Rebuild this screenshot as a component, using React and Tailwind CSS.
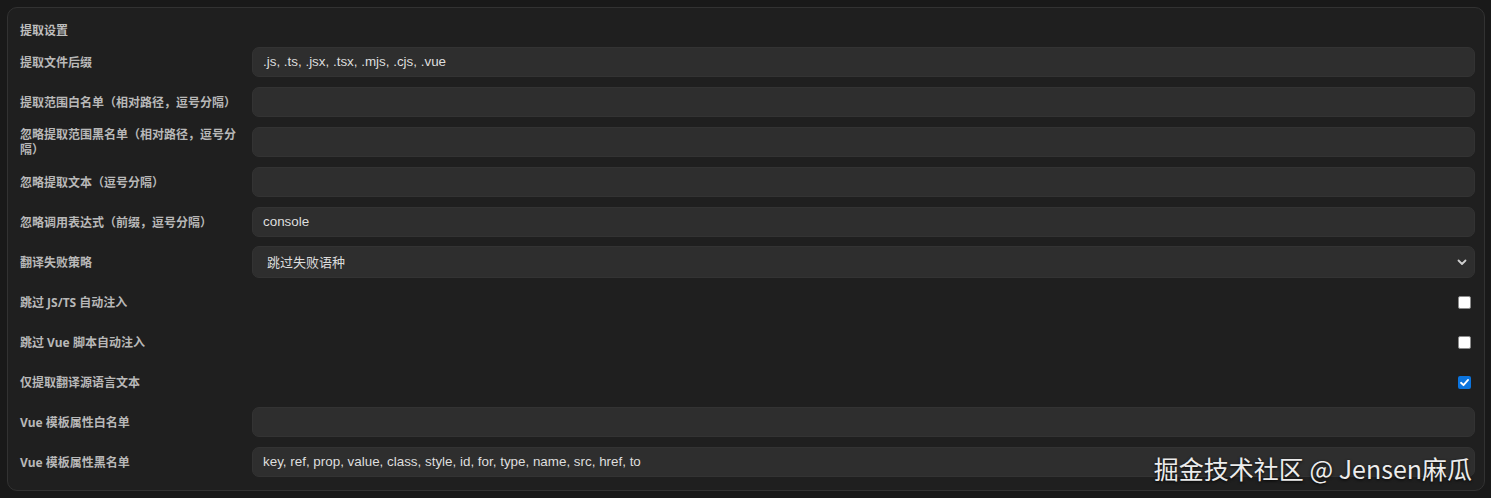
import React from "react";

const rows = [
  { label: "提取文件后缀", type: "input", value: ".js, .ts, .jsx, .tsx, .mjs, .cjs, .vue" },
  { label: "提取范围白名单（相对路径，逗号分隔）", type: "input", value: "" },
  { label: "忽略提取范围黑名单（相对路径，逗号分隔）", type: "input", value: "" },
  { label: "忽略提取文本（逗号分隔）", type: "input", value: "" },
  { label: "忽略调用表达式（前缀，逗号分隔）", type: "input", value: "console" },
  { label: "翻译失败策略", type: "select", value: "跳过失败语种" },
  { label: "跳过 JS/TS 自动注入", type: "check", value: false },
  { label: "跳过 Vue 脚本自动注入", type: "check", value: false },
  { label: "仅提取翻译源语言文本", type: "check", value: true },
  { label: "Vue 模板属性白名单", type: "input", value: "" },
  {
    label: "Vue 模板属性黑名单",
    type: "input",
    value: "key, ref, prop, value, class, style, id, for, type, name, src, href, to",
  },
];

function Field({ row }) {
  if (row.type === "check") {
    return (
      <div className="h-[30px] flex items-center justify-end pr-[4px]">
        {row.value ? (
          <span className="w-[13px] h-[13px] rounded-[2px] bg-[#0b74de] flex items-center justify-center">
            <svg width="11" height="11" viewBox="0 0 12 12">
              <path d="M2.2 6.3 L4.9 8.9 L9.9 3.2" fill="none" stroke="#fff" strokeWidth="2" strokeLinecap="round" strokeLinejoin="round" />
            </svg>
          </span>
        ) : (
          <span className="w-[13px] h-[13px] rounded-[2px] bg-white border border-[#8a8a8a]" />
        )}
      </div>
    );
  }
  if (row.type === "select") {
    return (
      <div className="h-[32px] -my-px rounded-[7px] bg-[#2e2e2e] border border-[#333] flex items-center justify-between pl-[14px] pr-[6px]">
        <span className="text-[13px] text-[#dcdcdc] font-['Noto_Sans_CJK_SC',sans-serif]">{row.value}</span>
        <svg width="12" height="12" viewBox="0 0 12 12">
          <path d="M2.5 4.5 L6 8 L9.5 4.5" fill="none" stroke="#cfcfcf" strokeWidth="1.8" strokeLinecap="round" strokeLinejoin="round" />
        </svg>
      </div>
    );
  }
  return (
    <div className="h-[30px] rounded-[7px] bg-[#2e2e2e] border border-[#333] flex items-center pl-[10px]">
      <span className="text-[13.4px] text-[#dedede] font-['Liberation_Sans',sans-serif]">{row.value}</span>
    </div>
  );
}

export default function App() {
  return (
    <div className="relative w-[1491px] h-[498px] bg-[#191919] p-[7px] font-['Noto_Sans','Noto_Sans_CJK_SC',sans-serif]">
      <div className="h-[484px] w-[1478px] rounded-[10px] border border-[#323232] bg-[#1f1f1f] pt-[14px] pl-[12px] pr-[9px]">
        <div className="text-[12px] leading-[18px] font-bold text-[#bdbdbd] mb-[7px]">提取设置</div>
        <div className="grid grid-cols-[232px_1fr] gap-y-[10px]">
          {rows.map((row) => (
            <React.Fragment key={row.label}>
              <div className="flex items-center pr-[12px] text-[12px] leading-[15px] font-bold text-[#b8b8b8]">
                {row.label}
              </div>
              <Field row={row} />
            </React.Fragment>
          ))}
        </div>
      </div>
      <div className="absolute right-[19px] bottom-[15px] text-[25px] leading-[30px] text-[#ececec] font-['Noto_Sans_CJK_SC',sans-serif] [text-shadow:0_1px_3px_rgba(0,0,0,0.9)]">
        掘金技术社区 @ Jensen麻瓜
      </div>
    </div>
  );
}
